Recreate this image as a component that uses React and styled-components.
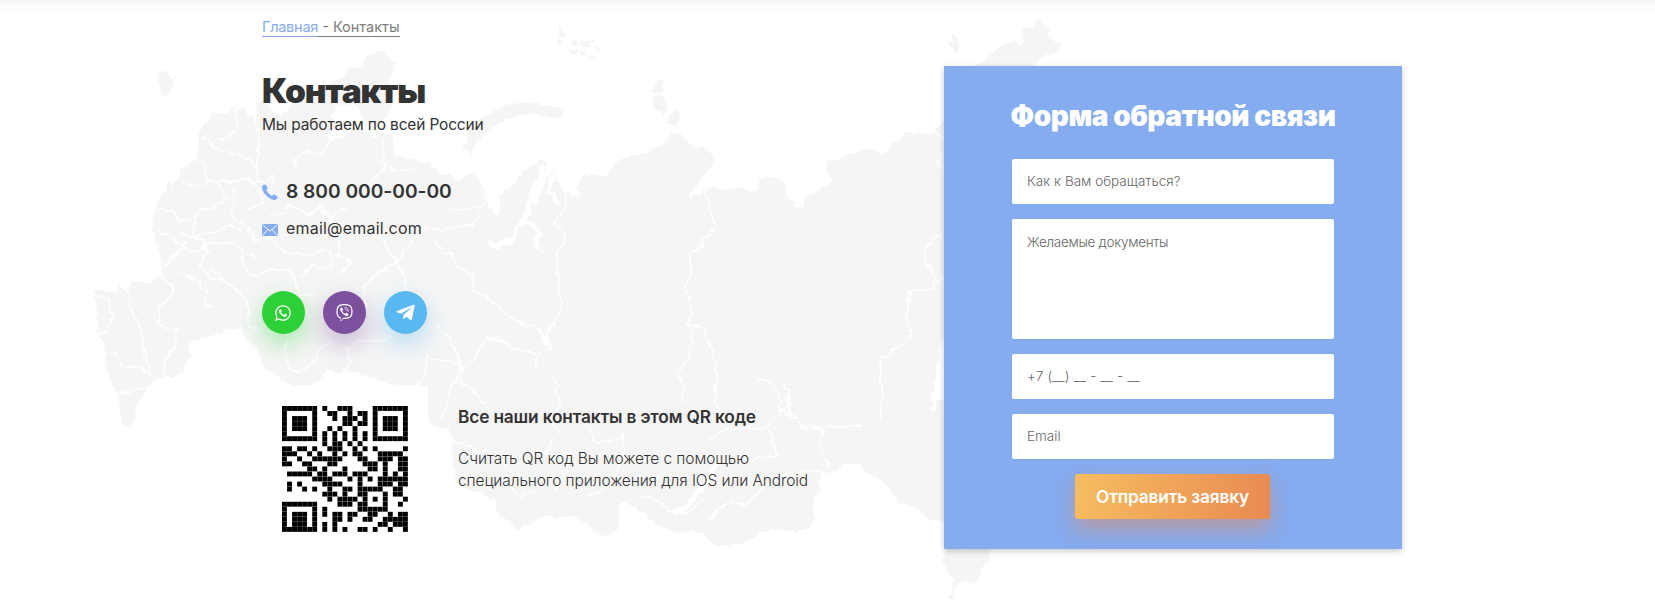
import React from "react";
import styled, { createGlobalStyle } from "styled-components";
import { FaWhatsapp, FaViber, FaTelegramPlane } from "react-icons/fa";

const GlobalStyle = createGlobalStyle`
  *, *::before, *::after { box-sizing: border-box; }
  body {
    margin: 0;
    background: #fff;
    color: #333;
    font-family: Inter, "Open Sans", sans-serif;
  }
  h1, h2, h3, p { margin: 0; }
  a { color: inherit; text-decoration: none; }
`;

const Page = styled.main`
  position: relative;
  height: 611px;
  overflow: hidden;
  background: linear-gradient(#f3f3f3, #fafafa 5px, #fff 12px);
`;

const MapBackdrop = styled.svg`
  position: absolute;
  inset: 0;
  width: 1655px;
  height: 611px;
  pointer-events: none;
`;

const Container = styled.div`
  position: relative;
  display: flex;
  justify-content: space-between;
  width: 1140px;
  margin-left: 262px;
`;

const Info = styled.section`
  display: flex;
  flex-direction: column;
  align-items: flex-start;
  padding-top: 18px;
`;

const Breadcrumbs = styled.nav`
  display: flex;
  height: 19px;
  font-size: 14.5px;
  line-height: 18px;
  letter-spacing: -0.05px;
  color: #7d7d7d;
`;

const Crumb = styled.span`
  white-space: pre;
  letter-spacing: ${(p) => (p.$link ? "-0.25px" : "0")};
  color: ${(p) => (p.$link ? "#86acf0" : "#7d7d7d")};
  border-bottom: 1px solid currentColor;
`;

const Title = styled.h1`
  margin-top: 33px;
  font-size: 33.5px;
  line-height: 42px;
  font-weight: 900;
  letter-spacing: -1.15px;
`;

const Subtitle = styled.p`
  margin-top: 3px;
  font-size: 15.5px;
  line-height: 20px;
  letter-spacing: -0.17px;
`;

const ContactList = styled.div`
  display: flex;
  flex-direction: column;
  gap: 13px;
  margin-top: 44px;
`;

const ContactLink = styled.a`
  display: flex;
  align-items: center;
  gap: 8px;
  height: 24px;
  font-size: ${(p) => (p.$strong ? "19.2px" : "16px")};
  font-weight: ${(p) => (p.$strong ? 600 : 400)};
  letter-spacing: ${(p) => (p.$strong ? "-0.02px" : "0.2px")};
  svg { flex: none; width: 16px; height: 16px; margin-top: ${(p) => (p.$strong ? 2 : 4)}px; }
`;

const Socials = styled.div`
  display: flex;
  gap: 18px;
  margin-top: 51px;
`;

const SocialButton = styled.a`
  display: flex;
  align-items: center;
  justify-content: center;
  width: 43px;
  height: 43px;
  padding-right: 1px;
  border-radius: 50%;
  color: #fff;
  font-size: ${(p) => p.$size || 18}px;
  background: ${(p) => p.$color};
  box-shadow: 0 10px 25px ${(p) => p.$glow};
`;

const QrRow = styled.div`
  display: flex;
  margin-top: 52px;
`;

const QrBox = styled.div`
  width: 166px;
  height: 166px;
  padding: 20px;
  background: #fff;
  svg { display: block; width: 126px; height: 126px; }
`;

const QrText = styled.div`
  margin-left: 30px;
  padding-top: 20px;
`;

const QrTitle = styled.h3`
  font-size: 17.3px;
  line-height: 22px;
  font-weight: 600;
  letter-spacing: -0.16px;
`;

const QrNote = styled.p`
  margin-top: 20px;
  font-size: 15.5px;
  line-height: 22px;
  font-weight: 300;
  letter-spacing: -0.09px;
`;

const FormCard = styled.form`
  display: flex;
  flex-direction: column;
  align-items: center;
  gap: 15px;
  width: 458px;
  height: 483px;
  margin-top: 66px;
  padding: 30px 68px;
  background: #86acf0;
  box-shadow: 0 2px 6px rgba(0, 0, 0, 0.22);
`;

const FormTitle = styled.h2`
  margin-bottom: 6px;
  font-size: 28px;
  line-height: 40px;
  padding-bottom: 2px;
  font-weight: 900;
  letter-spacing: -0.42px;
  white-space: nowrap;
  color: #fff;
`;

const Field = styled.input`
  display: block;
  flex: none;
  width: 322px;
  height: ${(p) => p.$height || 45}px;
  padding: ${(p) => (p.$height ? "15px" : "0 15px 2px")};
  border: 0;
  border-radius: 2px;
  outline: 0;
  resize: none;
  background: #fff;
  font: 300 13.5px/17px Inter, "Open Sans", sans-serif;
  letter-spacing: ${(p) => p.$spacing || "0"};
  &::placeholder { color: #666; opacity: 1; }
`;

const Submit = styled.button`
  flex: none;
  width: 195px;
  height: 45px;
  margin-right: 1px;
  padding: 0;
  border: 0;
  border-radius: 3px;
  color: #fff;
  font: 600 17.3px/22px Inter, "Open Sans", sans-serif;
  letter-spacing: -0.17px;
  background: linear-gradient(100deg, #f6bd60, #e98a52);
  box-shadow: 0 10px 20px rgba(233, 138, 82, 0.5);
`;

const QR_ROWS = [
  "XXXXXXX.X..XXX....XXXXXXX",
  "X.....X..XX..X.XX.X.....X",
  "X.XXX.X...X.XXX.X.X.XXX.X",
  "X.XXX.X.....XX.XX.X.XXX.X",
  "X.XXX.X..X.X..X...X.XXX.X",
  "X.....X.X.X.X.X.X.X.....X",
  "XXXXXXX.X.X.X.X.X.XXXXXXX",
  "........X.XX.X.X.........",
  "XX.XX.X..XXX..X.X.X.....X",
  "XXX..X.X..X.X.XX...XXXXX.",
  "X..X..XXXXXX...XX..XXX.XX",
  "XX..XX...XX.....XXX.X..XX",
  ".....XX.X...X....XX.X..XX",
  ".XXXXX.XX.XXX.XXX...X.X.X",
  "......XXXX...X.X.X.XXXXXX",
  ".X.X....XXXX...X...XXX.XX",
  ".X..X.X..X..XX.XXXXX..XX.",
  "........XXX.X..XX...X.XX.",
  ".........X.XXXX.X.X.X...X",
  "XXXXXXX....XXX.XX...X..X.",
  "X.....X.X......XXXXXX....",
  "X.XXX.X.X.XX.XX..XX..X.XX",
  "X.XXX.X...XX.X..XX..XXXXX",
  "X.XXX.X.X.X........XX.XXX",
  "XXXXXXX.X.X.X..XX.X..X..X",
];

const QrCode = () => (
  <svg viewBox="0 0 25 25" role="img" aria-label="QR">
    {QR_ROWS.flatMap((row, y) =>
      [...row].map((cell, x) =>
        cell === "X" ? <rect key={`${x}-${y}`} x={x} y={y} width="0.97" height="0.97" /> : null
      )
    )}
  </svg>
);

const LAND = [
  "M156 71L163 72L170 78L177 78L172 82L170 92L164 97L159 92L157 80Z",
  "M198 133L202 124L208 120L211 113L222 112L226 116L233 108L236 104L236 110L243 107L246 114L254 117L257 112L255 104L262 101L272 110L280 116L287 112L290 102L300 98L312 95L320 86L330 82L341 78L345 72L352 67L362 66L364 58L371 53L380 51L388 56L394 65L393 72L389 78L391 90L390 105L386 118L376 124L362 120L357 108L350 103L345 106L338 104L335 112L328 114L332 120L338 121L334 130L322 135L330 140L345 136L354 128L364 130L372 138L382 133L392 136L394 145L391 152L400 158L410 159L420 163L426 160L431 168L441 173L450 176L458 182L467 175L476 176L478 184L485 190L487 204L495 215L500 205L496 197L509 189L516 177L524 171L534 163L541 158L546 165L541 176L530 188L527 200L536 204L545 178L554 170L556 180L562 190L578 197L577 185L582 175L608 176L610 165L622 158L640 154L652 150L664 142L670 134L680 134L688 145L704 147L712 156L711 167L702 178L688 195L700 193L712 187L722 189L740 188L752 192L757 186L758 178L775 178L784 184L786 195L795 205L803 208L803 193L812 195L820 187L833 181L827 176L827 162L845 155L865 149L885 153L892 143L905 133L920 133L930 135L943 120L960 130L960 340L940 340L936 365L931 400L943 400L950 470L946 521L930 521L918 510L897 502L888 487L876 478L865 473L860 464L845 464L835 470L820 472L818 490L812 500L812 518L808 528L795 531L765 530L750 540L735 545L715 546L705 538L703 533L690 530L675 533L655 524L645 515L630 505L620 503L617 515L618 530L605 535L590 530L585 523L570 515L560 520L545 515L525 525L515 530L508 520L497 515L493 500L480 492L465 490L455 480L452 460L452 440L448 428L428 424L418 390L400 386L375 380L360 375L345 368L335 373L325 370L320 380L310 386L290 386L275 375L262 368L257 350L245 338L240 328L225 330L215 334L195 340L187 345L190 355L183 370L175 377L158 378L148 385L142 395L135 410L132 425L120 425L118 400L110 380L105 365L103 350L97 335L95 310L94 290L100 290L115 292L118 285L125 290L130 282L148 282L162 276L160 262L157 245L152 235L153 215L157 200L165 190L168 180L172 188L178 178L180 170L195 158Z",
  "M462 148L468 130L478 120L490 113L505 104L520 103L540 105L557 107L565 111L560 117L545 116L525 114L508 119L492 126L481 134L474 145L471 155Z",
  "M650 88L658 79L663 84L662 92L654 94L648 91ZM652 96L665 98L666 107L663 114L655 111L651 103ZM665 125L670 112L675 107L681 118L676 124Z",
  "M557 27L564 31L566 36L558 36ZM570 42L577 40L578 46L571 47ZM580 41L588 41L588 46L581 47ZM568 49L575 49L574 54L569 53ZM579 52L586 53L584 57L579 56ZM589 56L596 55L594 59L589 59ZM557 39L562 41L561 45L557 44ZM590 39L593 39L593 43L590 43ZM596 46L598 46L598 49L596 49Z",
  "M952 34L957 38L958 44L955 53L951 49L948 43Z",
  "M960 76L985 59L1000 46L1012 42L1020 45L1024 40L1018 38L1022 28L1032 27L1037 19L1041 25L1048 28L1048 36L1054 41L1060 43L1058 52L1044 56L1032 64L1025 76Z",
  "M945 548L990 548L988 560L982 567L978 578L971 584L962 579L955 586L952 598L947 599L952 590L951 578L943 566Z",
];

const WIDE_RIVERS = [
  "M541 166L538 185L530 195L526 213L518 225L512 237L505 243L494 246L488 244",
  "M522 222L535 226L538 235L533 243L538 249",
  "M492 190L497 205L496 213",
  "M553 175L548 190L556 202M567 183L575 196",
  "M713 182L702 188L689 197",
  "M718 455L710 475L698 492L684 508L673 513",
  "M942 352L936 380L933 408",
];

const BORDERS = [
  "M565 188L566 207L553 222L564 234L564 242L556 253L557 294L562 304L553 323L544 335L549 349L537 354L534 369",
  "M704 188L709 208L715 228L702 240L702 246L687 253L691 270L685 287L691 312L687 323L702 328L710 350L716 375L714 400L722 412",
  "M691 328L689 355L677 372L683 388L680 402",
  "M932 132L945 138M940 152L937 165L943 172M940 234L925 247L924 260L935 277L932 288L908 291L906 320L911 335L900 346L881 358L879 378L882 395L880 420",
  "M943 278L934 283",
  "M434 242L441 250L454 258L455 265L471 275L472 290L490 300L512 319L537 328L549 349",
  "M382 138L383 170L372 180M378 160L392 170L412 172",
  "M270 215L285 213L288 205L308 215L320 206L330 218L344 208",
  "M484 192L483 206L460 210L450 209M478 215L471 224L440 230L425 227",
  "M425 228L410 242L395 262L375 275L362 286L365 308L350 314",
  "M394 262L404 276L405 292M382 240L395 262M370 235L382 240",
  "M437 324L449 340L456 354L461 365L442 360L430 358M461 368L459 382L476 394L490 410",
  "M460 366L448 395L440 418M425 353L424 376L412 390",
  "M461 368L472 360L485 338L500 340L515 350L535 353",
  "M202 138L213 147L230 153L244 158L255 165L258 183L271 176L272 192",
  "M236 108L234 133L220 140M254 118L258 140L255 170M295 170L292 160L305 152L320 155L331 138",
  "M195 158L203 165L206 180L216 182L226 198L212 208L196 211L193 230",
  "M180 180L195 187L213 181L230 183L242 178L255 185L262 202L247 210",
  "M157 210L172 210L178 222L190 220L193 236L216 232L228 225L241 230",
  "M233 190L234 205L230 218L245 226L255 240L272 238",
  "M157 231L172 235L180 246L195 251L206 242L222 244L235 241L240 253L255 256",
  "M162 266L176 255L183 242M178 232L200 240L208 253L199 265L206 275L220 280",
  "M211 270L225 282L240 294L248 308L247 326L256 330",
  "M240 254L246 272L256 276L265 270L290 270L295 282L298 294L315 296",
  "M272 243L284 253L310 255L322 250L334 256L330 268L310 266L300 278",
  "M345 232L338 244L336 254L350 263L338 275M318 208L331 223L350 229",
  "M148 282L160 276L172 286L170 297L158 305L158 325L174 331M179 273L193 278L206 292L204 304L213 307",
  "M95 294L108 300L112 318L106 330L96 335M125 289L130 310L137 318L142 340L148 370L151 380",
  "M176 328L174 345L163 362L163 378M105 354L116 354L122 367L140 367L148 374M115 393L131 392L140 387",
  "M286 322L287 335L284 350L287 369L299 372M303 370L313 362L320 347L331 342",
  "M345 375L350 360L345 350L357 340L372 342L390 337L398 333",
  "M554 389L560 402L551 419L560 434M548 373L559 386",
  "M440 440L465 443L477 452L500 450M501 450L505 478L518 498L535 490",
  "M552 440L545 452L552 460L570 449L564 472L555 490M587 425L594 442L618 439M620 430L624 450L616 475L600 491L586 497",
  "M755 377L770 383L779 395L778 410L790 416M784 385L790 404L781 411",
  "M784 396L790 414L803 428L822 430L818 447L827 465M800 423L816 428L860 425",
  "M710 440L724 430L745 427L763 429L780 413M768 430L776 455L750 460M630 498L650 496L668 510L686 514L703 498",
  "M708 520L727 502L745 505L762 487L785 474L818 472",
];

const RussiaMap = () => (
  <MapBackdrop viewBox="0 0 1655 611" aria-hidden="true">
    <defs>
      <filter id="coast" x="0" y="0" width="1655" height="611" filterUnits="userSpaceOnUse">
        <feTurbulence type="fractalNoise" baseFrequency="0.13" numOctaves="3" seed="4" />
        <feDisplacementMap in="SourceGraphic" scale="7" xChannelSelector="R" yChannelSelector="G" />
      </filter>
    </defs>
    <g filter="url(#coast)" transform="translate(1 0)">
      <path d={LAND.join("")} fill="#f5f5f5" />
      <g fill="none" stroke="#fff" strokeLinejoin="round" strokeLinecap="round">
        <path d={WIDE_RIVERS.join("")} strokeWidth="4.5" />
        <path d={BORDERS.join("")} strokeWidth="1.7" />
      </g>
    </g>
  </MapBackdrop>
);

const PhoneIcon = () => (
  <svg viewBox="0 0 16 16" fill="#86acf0">
    <path d="M1 1.2C1.8.4 3 .1 3.7.8L5.3 3.2C5.8 4 5.5 4.8 4.9 5.3L4.1 6C4.8 8 7.5 10.9 9.8 11.9L10.7 11C11.2 10.5 12 10.3 12.8 10.8L15.1 12.3C16 12.9 15.8 14 15 14.8C14 15.8 12.6 16.2 11 15.7C6.2 14.4 1.3 9.4.2 4.8C-.1 3.3.1 2.1 1 1.2Z" />
  </svg>
);

const MailIcon = () => (
  <svg viewBox="0 0 16 16">
    <rect y="2" width="16" height="12" rx="1" fill="#86acf0" />
    <path d="M.5 2.8L8 9L15.5 2.8M.7 13.4L6 7.4M15.3 13.4L10 7.4" fill="none" stroke="#fff" strokeWidth="0.9" />
  </svg>
);

export default function App() {
  return (
    <Page>
      <GlobalStyle />
      <RussiaMap />
      <Container>
        <Info>
          <Breadcrumbs>
            <Crumb as="a" href="#" $link>Главная</Crumb>
            <Crumb>{" - Контакты"}</Crumb>
          </Breadcrumbs>
          <Title>Контакты</Title>
          <Subtitle>Мы работаем по всей России</Subtitle>
          <ContactList>
            <ContactLink href="#" $strong><PhoneIcon />8 800 000-00-00</ContactLink>
            <ContactLink href="#"><MailIcon />email@email.com</ContactLink>
          </ContactList>
          <Socials>
            <SocialButton href="#" $color="#2dd137" $glow="rgba(45, 209, 55, 0.4)"><FaWhatsapp /></SocialButton>
            <SocialButton href="#" $color="#7b519d" $glow="rgba(123, 81, 157, 0.4)" $size={17}><FaViber /></SocialButton>
            <SocialButton href="#" $color="#5ab8f0" $glow="rgba(90, 184, 240, 0.4)" $size={21}><FaTelegramPlane /></SocialButton>
          </Socials>
          <QrRow>
            <QrBox><QrCode /></QrBox>
            <QrText>
              <QrTitle>Все наши контакты в этом QR коде</QrTitle>
              <QrNote>
                Считать QR код Вы можете с помощью
                <br />
                специального приложения для IOS или Android
              </QrNote>
            </QrText>
          </QrRow>
        </Info>
        <FormCard onSubmit={(e) => e.preventDefault()}>
          <FormTitle>Форма обратной связи</FormTitle>
          <Field placeholder="Как к Вам обращаться?" />
          <Field as="textarea" $height={120} $spacing="-0.3px" placeholder="Желаемые документы" />
          <Field placeholder="+7 (__) __ - __ - __" $spacing="0.2px" />
          <Field placeholder="Email" />
          <Submit>Отправить заявку</Submit>
        </FormCard>
      </Container>
    </Page>
  );
}
